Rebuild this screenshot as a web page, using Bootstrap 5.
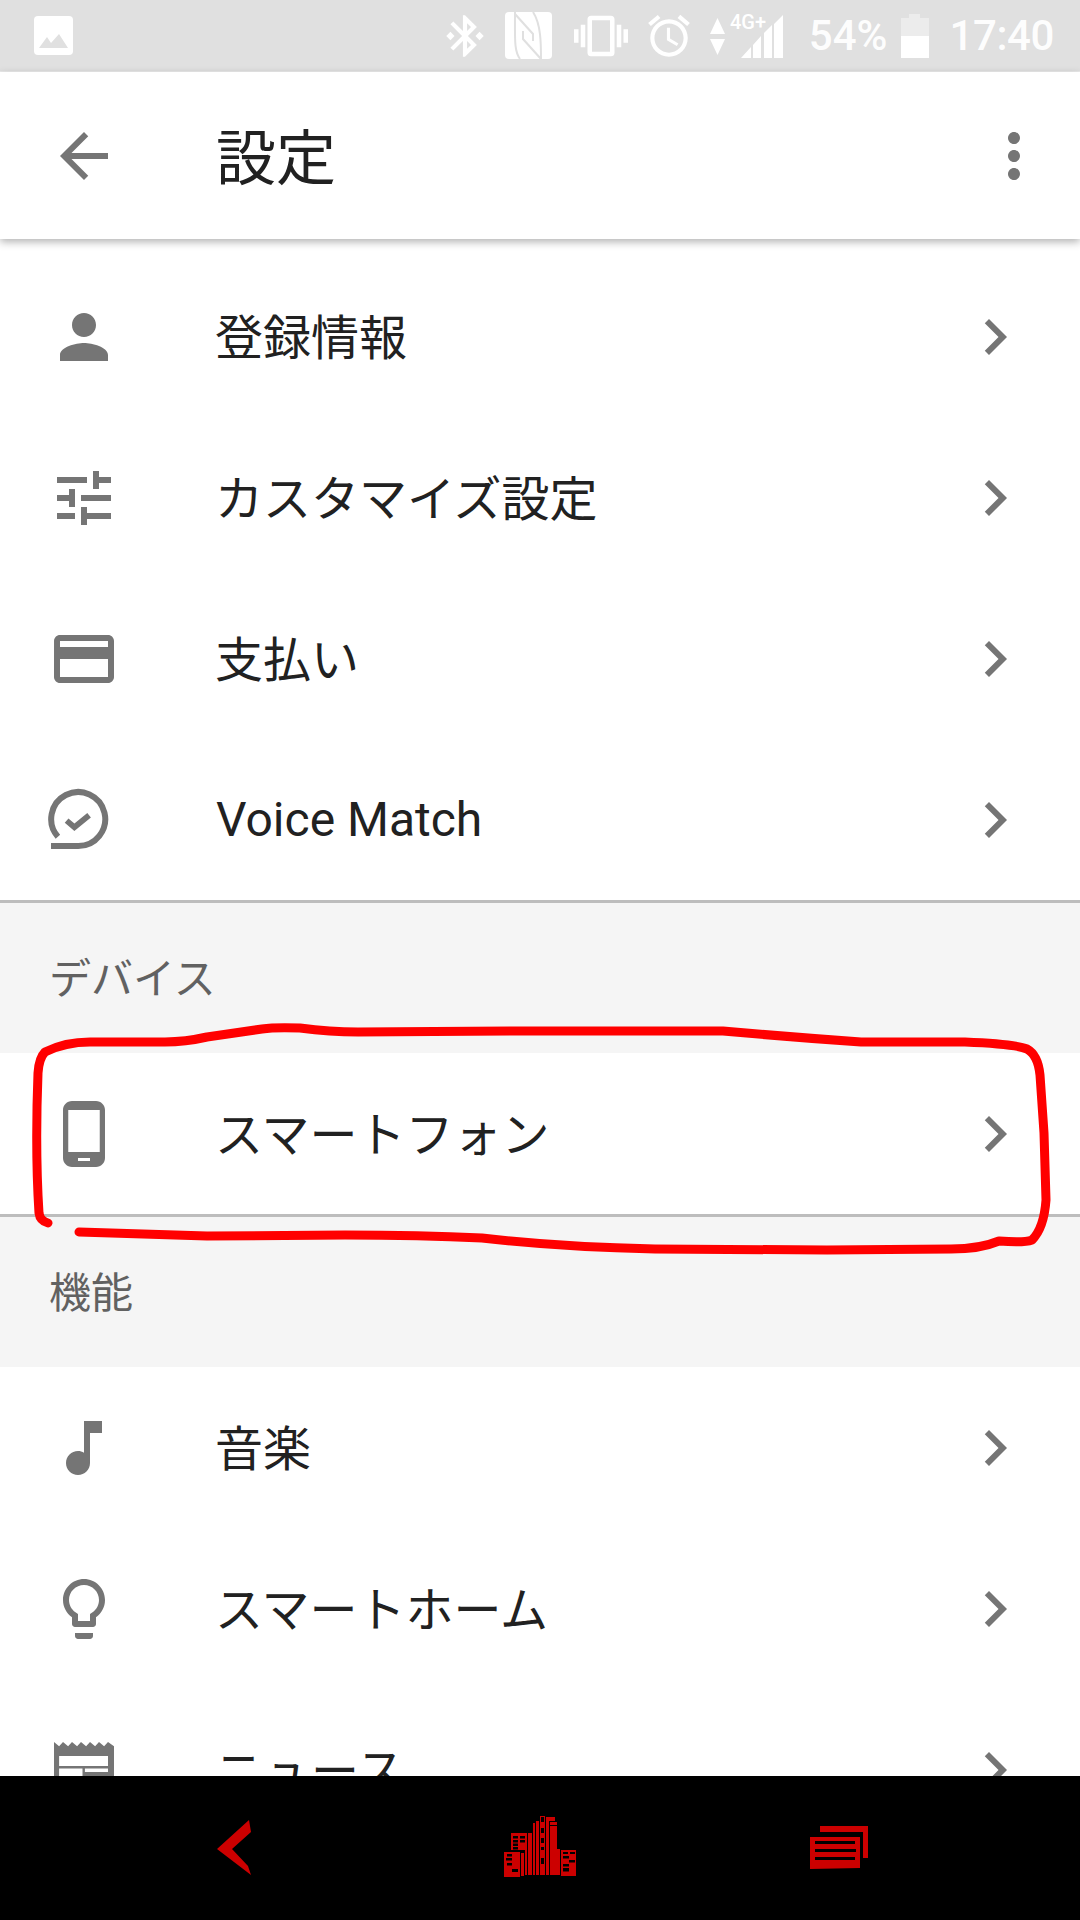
<!DOCTYPE html>
<html lang="ja">
<head>
  <meta charset="UTF-8">
  <meta name="viewport" content="width=device-width, initial-scale=1.0">
  <title>設定</title>
  <link href="https://cdn.jsdelivr.net/npm/bootstrap@5.3.0/dist/css/bootstrap.min.css" rel="stylesheet">
  <style>
    body {
      width: 1080px;
      height: 1920px;
      overflow: hidden;
      background-color: #f5f5f5;
      font-family: "Noto Sans CJK JP", Roboto, sans-serif;
      color: #212121;
    }
    .status-strip {
      height: 72px;
      background-color: #e0e0e0;
      border-bottom: 1px solid #ececec;
      padding: 0 26px 0 34px;
    }
    .status-num {
      font-family: Roboto, sans-serif;
      font-size: 42px;
      font-weight: 500;
      line-height: 72px;
      color: #fff;
      opacity: .95;
    }
    .st-nfc { margin-left: 15px; }
    .st-vib { margin-left: 22px; }
    .st-alarm { margin-left: 16px; }
    .st-signal { margin-left: 13px; }
    .st-pct { margin-left: 24px; }
    .st-batt { margin-left: 14px; }
    .st-time { margin-left: 20px; letter-spacing: -.4px; }
    .app-head {
      height: 167px;
      padding: 0 30px 0 48px;
      position: relative;
      z-index: 2;
      box-shadow: 0 3px 8px rgba(0, 0, 0, .3);
    }
    .app-title {
      font-size: 60px;
      font-weight: 400;
      margin: 0 0 0 96px;
      padding-bottom: 4px;
      color: #212121;
    }
    .settings-body {
      min-height: 0;
      overflow: hidden;
    }
    .pane-top { padding-top: 17px; background-color: #fff; }
    .setting-row {
      height: 161px;
      padding: 0 49px 0 48px;
      border: 0;
      background-color: #fff;
      color: #212121;
      font-size: 48px;
    }
    .setting-row span {
      margin-left: 95px;
      padding-bottom: 5px;
      font-family: "Noto Sans CJK JP", sans-serif;
    }
    .setting-row .latin {
      font-family: Roboto, "Noto Sans CJK JP", sans-serif;
      margin-left: 96px;
      padding-bottom: 0;
    }
    .glyph { width: 72px; height: 72px; fill: #757575; flex: none; }
    .section-label {
      height: 150px;
      padding-left: 49px;
      font-size: 42px;
      line-height: 145px;
      color: #616161;
      background-color: #f5f5f5;
    }
    .rule-line { height: 3px; background-color: #bdbdbd; }
    .soft-nav {
      height: 144px;
      background-color: #000;
      gap: 203px;
    }
    .soft-nav svg { width: 100px; height: 144px; fill: #cc0000; }
    .red-ink {
      position: absolute;
      left: 0;
      top: 0;
      width: 1080px;
      height: 1920px;
      pointer-events: none;
      z-index: 5;
    }
  </style>
</head>
<body class="d-flex flex-column position-relative">

<svg class="d-none">
  <symbol id="chev" viewBox="0 0 24 24"><path d="M10 6L8.59 7.41 13.17 12l-4.58 4.59L10 18l6-6z"/></symbol>
</svg>

<!-- status bar -->
<div class="status-strip d-flex align-items-center flex-shrink-0">
  <svg width="39" height="39" viewBox="34 16 39 39">
    <rect x="34" y="16" width="39" height="39" rx="4" fill="#fff"/>
    <path d="M39 48l8-11 4 6 8-9 9 14z" fill="#e0e0e0"/>
  </svg>
  <div class="d-flex align-items-center ms-auto">
    <svg width="50" height="50" viewBox="0 0 24 24" fill="#fff"><path d="M7 12l-2-2-2 2 2 2 2-2zm10.71-4.29L12 2h-1v7.59L6.41 5 5 6.41 10.59 12 5 17.59 6.41 19 11 14.41V22h1l5.71-5.71-4.3-4.29 4.3-4.29zM13 5.83l1.88 1.88L13 9.59V5.83zm1.88 10.46L13 18.17v-3.76l1.88 1.88zM19 10l-2 2 2 2 2-2-2-2z"/></svg>
    <svg class="st-nfc" width="47" height="48" viewBox="504 13 47 48">
      <rect x="504" y="13" width="47" height="47" rx="4" fill="#fff"/>
      <path d="M514 13C514 40 513 52 519 60M514 15L532 35V42M522 32V40L540 60M532 13C540 25 540 45 540 60" fill="none" stroke="#e0e0e0" stroke-width="2"/>
    </svg>
    <svg class="st-vib" width="54" height="54" viewBox="0 0 24 24" fill="#fff"><path d="M0 15h2V9H0v6zm3 2h2V7H3v10zm19-8v6h2V9h-2zm-3 8h2V7h-2v10zM16.5 3h-9C6.67 3 6 3.67 6 4.5v15c0 .83.67 1.5 1.5 1.5h9c.83 0 1.5-.67 1.5-1.5v-15c0-.83-.67-1.5-1.5-1.5zM16 19H8V5h8v14z"/></svg>
    <svg class="st-alarm" width="50" height="50" viewBox="0 0 24 24" fill="#fff"><path d="M22 5.72l-4.6-3.86-1.29 1.53 4.6 3.86L22 5.72zM7.88 3.39L6.6 1.86 2 5.71l1.29 1.53 4.59-3.85zM12.5 8H11v6l4.75 2.85.75-1.23-4-2.37V8zM12 4c-4.97 0-9 4.03-9 9s4.02 9 9 9c4.97 0 9-4.03 9-9s-4.03-9-9-9zm0 16c-3.87 0-7-3.13-7-7s3.13-7 7-7 7 3.13 7 7-3.13 7-7 7z"/></svg>
    <svg class="st-signal" width="78" height="50" viewBox="706 10 78 50" fill="#fff">
      <path d="M716.500 17l7.500 16h-15zM709 38h15l-7.500 16z"/>
      <path d="M740 57l10-11v11zM752 57V44l8-9v22zM763 57V32l8-8v33zM773 57V23l9-9v43z"/>
      <text x="729" y="28" font-family="Roboto, sans-serif" font-size="20" font-weight="500" fill="#fff">4G+</text>
    </svg>
    <div class="status-num st-pct">54%</div>
    <svg class="st-batt" width="28" height="44" viewBox="899 14 28 44">
      <path d="M907 14h11v4h9v18h-28V18h8z" fill="#fff" opacity=".4"/>
      <rect x="899" y="36" width="28" height="22" fill="#fff"/>
    </svg>
    <div class="status-num st-time">17:40</div>
  </div>
</div>

<!-- app bar -->
<div class="app-head bg-white d-flex align-items-center flex-shrink-0">
  <svg class="glyph" viewBox="0 0 24 24"><path d="M20 11H7.830l5.590-5.590L12 4l-8 8 8 8 1.410-1.410L7.830 13H20v-2z"/></svg>
  <h1 class="app-title">設定</h1>
  <svg class="glyph ms-auto" viewBox="0 0 24 24"><path d="M12 8c1.100 0 2-.9 2-2s-.9-2-2-2-2 .9-2 2 .9 2 2 2zm0 2c-1.100 0-2 .9-2 2s.9 2 2 2 2-.9 2-2-.9-2-2-2zm0 6c-1.100 0-2 .9-2 2s.9 2 2 2 2-.9 2-2-.9-2-2-2z"/></svg>
</div>

<div class="settings-body flex-grow-1">
  <div class="pane-top">
    <div class="list-group list-group-flush">
      <div class="list-group-item setting-row d-flex align-items-center">
        <svg class="glyph" viewBox="0 0 24 24"><path d="M12 12c2.210 0 4-1.790 4-4s-1.790-4-4-4-4 1.790-4 4 1.790 4 4 4zm0 2c-2.670 0-8 1.340-8 4v2h16v-2c0-2.660-5.330-4-8-4z"/></svg>
        <span>登録情報</span>
        <svg class="glyph ms-auto"><use href="#chev"/></svg>
      </div>
      <div class="list-group-item setting-row d-flex align-items-center">
        <svg class="glyph" viewBox="0 0 24 24"><path d="M3 17v2h6v-2H3zM3 5v2h10V5H3zm10 16v-2h8v-2h-8v-2h-2v6h2zM7 9v2H3v2h4v2h2V9H7zm14 4v-2H11v2h10zm-6-4h2V7h4V5h-4V3h-2v6z"/></svg>
        <span>カスタマイズ設定</span>
        <svg class="glyph ms-auto"><use href="#chev"/></svg>
      </div>
      <div class="list-group-item setting-row d-flex align-items-center">
        <svg class="glyph" viewBox="0 0 24 24"><path d="M20 4H4c-1.110 0-1.990.89-1.990 2L2 18c0 1.110.89 2 2 2h16c1.110 0 2-.89 2-2V6c0-1.110-.89-2-2-2zm0 14H4v-6h16v6zm0-10H4V6h16v2z"/></svg>
        <span>支払い</span>
        <svg class="glyph ms-auto"><use href="#chev"/></svg>
      </div>
      <div class="list-group-item setting-row d-flex align-items-center">
        <svg class="glyph" viewBox="0 0 24 24"><path d="M3.300 17.600A9 9 0 1 1 10 20.670H1" fill="none" stroke="#757575" stroke-width="2"/><path d="M6.200 12.200l2.600 2.200 4.900-4" fill="none" stroke="#757575" stroke-width="1.900"/></svg>
        <span class="latin">Voice Match</span>
        <svg class="glyph ms-auto"><use href="#chev"/></svg>
      </div>
    </div>
  </div>
  <div class="rule-line"></div>

  <div class="section-label">デバイス</div>
  <div class="list-group list-group-flush">
    <div class="list-group-item setting-row d-flex align-items-center">
      <svg class="glyph" viewBox="0 0 24 24"><path d="M16 1H8C6.340 1 5 2.340 5 4v16c0 1.660 1.340 3 3 3h8c1.660 0 3-1.340 3-3V4c0-1.660-1.340-3-3-3zm-2 20h-4v-1h4v1zm3.250-3H6.750V4h10.500v14z"/></svg>
      <span>スマートフォン</span>
      <svg class="glyph ms-auto"><use href="#chev"/></svg>
    </div>
  </div>
  <div class="rule-line"></div>

  <div class="section-label">機能</div>
  <div class="list-group list-group-flush">
    <div class="list-group-item setting-row d-flex align-items-center">
      <svg class="glyph" viewBox="0 0 24 24"><path d="M12 3v10.550c-.59-.34-1.270-.55-2-.55-2.210 0-4 1.790-4 4s1.790 4 4 4 4-1.790 4-4V7h4V3h-6z"/></svg>
      <span>音楽</span>
      <svg class="glyph ms-auto"><use href="#chev"/></svg>
    </div>
    <div class="list-group-item setting-row d-flex align-items-center">
      <svg class="glyph" viewBox="0 0 24 24"><path d="M9 21c0 .55.45 1 1 1h4c.55 0 1-.45 1-1v-1H9v1zm3-19C8.140 2 5 5.140 5 9c0 2.380 1.190 4.470 3 5.740V17c0 .55.45 1 1 1h6c.55 0 1-.45 1-1v-2.260c1.810-1.270 3-3.360 3-5.740 0-3.860-3.140-7-7-7zm2.850 11.100l-.85.6V16h-4v-2.300l-.85-.6C7.800 12.160 7 10.630 7 9c0-2.760 2.240-5 5-5s5 2.240 5 5c0 1.630-.8 3.160-2.150 4.100z"/></svg>
      <span>スマートホーム</span>
      <svg class="glyph ms-auto"><use href="#chev"/></svg>
    </div>
    <div class="list-group-item setting-row d-flex align-items-center">
      <svg class="glyph" viewBox="0 0 24 24"><path fill-rule="evenodd" d="M2 2.700l1.700 1.400L5 2.700l1.700 1.400L8 2.700l1.700 1.400L11 2.700l1.700 1.400L14 2.700l1.700 1.400L17 2.700l1.700 1.400L20 2.700l2 1.400V22H2zM3.700 7.300v3.400H20V7.300zM3.700 11.500V20h7.800v-8.500zM12.300 11.500v1.200H20v-1.200zM12.300 14.500v1.200H20v-1.200z"/></svg>
      <span>ニュース</span>
      <svg class="glyph ms-auto"><use href="#chev"/></svg>
    </div>
  </div>
</div>

<!-- android soft keys -->
<div class="soft-nav d-flex justify-content-center flex-shrink-0">
  <svg viewBox="186 1776 100 144"><path d="M248 1820l2 12-19 17 16 17 3 9-34-26z"/></svg>
  <svg viewBox="490 1776 100 144">
    <path d="M504 1852h16v25h-16zM521 1853h3v23h-3zM511 1833h16v42h-2v-25h-14zM528 1833h4v42h-4zM533 1823h2v52h-2zM536 1821h3v54h-3zM540 1816h5v59h-5zM546 1817h3v58h-3zM550 1826h7v49h-7zM547 1817h8v4h-8zM550 1822h7v3h-7zM556 1849h4v26h-4zM561 1850h15v26h-15z"/>
    <g fill="#000">
      <rect x="507" y="1854" width="5" height="2.500"/><rect x="506" y="1858" width="6" height="2.500"/><rect x="507" y="1863" width="5" height="2.500"/><rect x="512" y="1869" width="6" height="3"/>
      <rect x="513" y="1836" width="5" height="2.500"/><rect x="520" y="1836" width="5" height="2.500"/><rect x="513" y="1840" width="5" height="2.500"/><rect x="520" y="1840" width="5" height="2.500"/><rect x="513" y="1843.500" width="5" height="2.500"/><rect x="513" y="1847" width="5" height="2.500"/>
      <rect x="541" y="1817" width="3" height="5"/><rect x="541" y="1828" width="3" height="5"/><rect x="541" y="1838" width="3" height="5"/><rect x="541" y="1847" width="3" height="3"/><rect x="541" y="1858" width="3" height="6"/>
      <rect x="563" y="1852" width="5" height="2"/><rect x="570" y="1852" width="5" height="2"/><rect x="563" y="1856" width="6" height="2.500"/><rect x="569" y="1860" width="6" height="2.500"/><rect x="563" y="1864" width="6" height="2.500"/><rect x="563" y="1868" width="6" height="3.500"/>
    </g>
  </svg>
  <svg viewBox="793 1776 100 144">
    <path d="M820 1826h48v32h-5v-26h-43z"/>
    <path d="M810 1837h50v31l-50 1z"/>
    <g fill="#000"><rect x="815" y="1841" width="40" height="3"/><rect x="815" y="1849" width="41" height="3"/><rect x="815" y="1857" width="40" height="3"/></g>
  </svg>
</div>

<!-- hand drawn annotation -->
<svg class="red-ink" viewBox="0 0 1080 1920">
  <path fill="none" stroke="#ff0000" stroke-width="9" stroke-linecap="round" stroke-linejoin="round"
    d="M48 1223Q40 1221 39 1213Q35 1150 38 1073Q39 1058 45 1052Q65 1042 90 1042L165 1042Q185 1042 207 1037L262 1029Q275 1027 300 1028Q330 1032 358 1032L517 1031L723 1031Q790 1037 861 1042L965 1042Q1015 1044 1027 1049Q1038 1055 1040 1075L1044 1133L1046 1200Q1044 1228 1032 1240Q1024 1243 999 1241Q980 1249 951 1249L827 1250L655 1249Q560 1247 482 1238Q420 1235 345 1235L207 1236L79 1232"/>
</svg>

<script src="https://cdn.jsdelivr.net/npm/bootstrap@5.3.0/dist/js/bootstrap.bundle.min.js"></script>
</body>
</html>
